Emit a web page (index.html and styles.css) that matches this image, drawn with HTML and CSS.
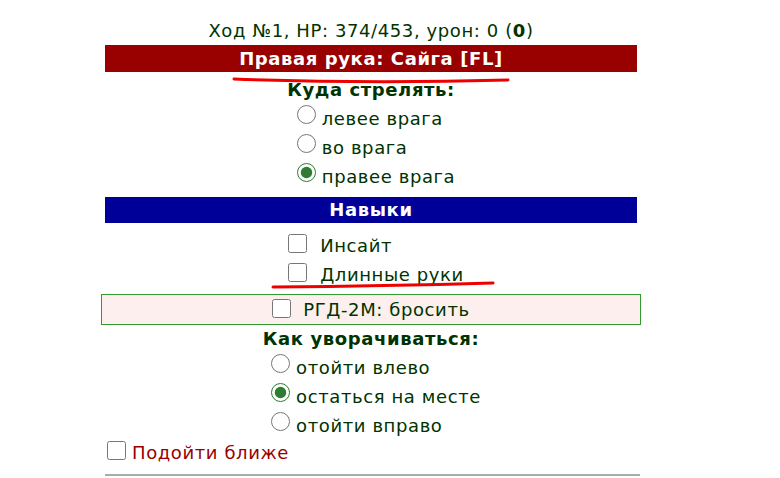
FILE: index.html
```html
<!DOCTYPE html>
<html lang="ru">
<head>
  <meta charset="UTF-8" />
  <title>Бой</title>
  <link rel="stylesheet" href="styles.css">
</head>
<body>

<div class="page">
  <div class="turn">Ход №1, HP: 374/453, урон: 0 (<b>0</b>)</div>

  <!-- оружие -->
  <div class="bar bar-red">Правая рука: Сайга [FL]</div>
  <div class="title">Куда стрелять:</div>
  <div class="group">
    <div class="choices">
      <label class="row"><input type="radio" name="shot">левее врага</label>
      <label class="row"><input type="radio" name="shot">во врага</label>
      <label class="row"><input type="radio" name="shot" checked>правее врага</label>
    </div>
  </div>

  <!-- навыки -->
  <div class="bar bar-blue">Навыки</div>
  <div class="group">
    <div class="skills">
      <label class="row"><input type="checkbox">Инсайт</label>
      <label class="row"><input type="checkbox">Длинные руки</label>
    </div>
  </div>

  <div class="item-box">
    <label><input type="checkbox">РГД-2М: бросить</label>
  </div>

  <div class="title title-dodge">Как уворачиваться:</div>
  <div class="group">
    <div class="choices">
      <label class="row"><input type="radio" name="dodge">отойти влево</label>
      <label class="row"><input type="radio" name="dodge" checked>остаться на месте</label>
      <label class="row"><input type="radio" name="dodge">отойти вправо</label>
    </div>
  </div>

  <label class="approach"><input type="checkbox">Подойти ближе</label>
  <hr>

  <!-- пометки красным -->
  <svg class="marks" width="540" height="478" viewBox="0 0 540 478">
    <path d="M129 79 Q 262 84 403 80" />
    <path d="M168 287 Q 280 286 388 283" />
  </svg>
</div>

</body>
</html>
```

FILE: styles.css
```css
* {
  box-sizing: border-box;
}
body {
  margin: 0;
  background: #fff;
  font-family: 'DejaVu Sans', Verdana, sans-serif;
  font-size: 18px;
  letter-spacing: 0.6px;
  color: #003300;
}

.page {
  position: relative;
  width: 532px;
  margin-left: 105px;
  padding-top: 17px;
}

.turn {
  text-align: center;
  line-height: 28px;
}

.bar {
  height: 27px;
  line-height: 27px;
  text-align: center;
  font-weight: bold;
  color: #fff;
}
.bar-red {
  background-color: #990000;
}
.bar-blue {
  background-color: #000099;
  margin-top: 6px;
  height: 26px;
  line-height: 26px;
}

.title {
  text-align: center;
  font-weight: bold;
  line-height: 28px;
  margin-top: 4px;
}
.title-dodge {
  margin-top: 0;
}

.group {
  text-align: center;
}

.choices,
.skills {
  display: inline-block;
  text-align: left;
  margin-left: 10px;
}

.row {
  display: flex;
  align-items: center;
  height: 29px;
}

input[type="radio"],
input[type="checkbox"] {
  width: 19px;
  height: 19px;
  margin: 0 6px 0 0;
  accent-color: #2e7d32;
  flex: none;
}

.choices .row input {
  position: relative;
  top: -4px;
}

.skills {
  margin-top: 8px;
}
.skills input {
  margin-right: 13px;
  position: relative;
  top: -2px;
}

.item-box {
  margin: 5px -4px 0;
  height: 31px;
  border: 1px solid #2f9a2f;
  background-color: #fdefed;
  display: flex;
  justify-content: center;
  align-items: center;
}
.item-box label {
  display: flex;
  align-items: center;
}
.item-box input {
  margin-right: 12px;
  position: relative;
  top: -1px;
}

.approach {
  display: flex;
  align-items: center;
  height: 24px;
  margin-left: 2px;
  color: #990000;
}
.approach input {
  position: relative;
  top: -2px;
}

hr {
  margin: 10px -3px 0 0;
  border: none;
  border-top: 2px solid #aaa;
}

.marks {
  position: absolute;
  top: 0;
  left: 0;
  pointer-events: none;
}
.marks path {
  fill: none;
  stroke: #ee0000;
  stroke-width: 3;
  stroke-linecap: round;
}
```
